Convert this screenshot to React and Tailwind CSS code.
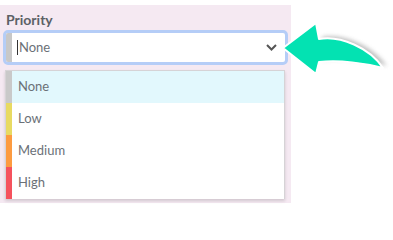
import React from "react";

const options = [
  { label: "None", bar: "bg-[#c9c9c9]", row: "bg-[#e2f8fd]" },
  { label: "Low", bar: "bg-[#e8da62]", row: "bg-white" },
  { label: "Medium", bar: "bg-[#fd9b40]", row: "bg-white" },
  { label: "High", bar: "bg-[#f5525d]", row: "bg-white" },
];

export default function App() {
  return (
    <div className="relative w-[393px] h-[208px] bg-white pt-[5px] font-['Lato',sans-serif] overflow-hidden">
      <div className="w-[291px] h-[198px] bg-[#f5e9f2] pt-[5px] pl-[3px]">
        <div className="h-[20px] leading-[20px] text-[14px] font-bold text-[#5c6166] pl-[3px]">
          Priority
        </div>
        <div className="flex items-stretch w-[285px] h-[35px] border-[3px] border-[#b5cdf7] rounded-[5px] bg-white overflow-hidden">
          <div className="w-[6px] bg-[#c8c8c8]" />
          <div className="flex flex-1 items-center pl-[5px] pr-[8px]">
            <span className="w-px h-[15px] bg-[#333]" />
            <span className="ml-[1px] text-[13px] text-[#6b7177]">None</span>
            <span className="flex-1" />
            <svg width="11" height="7" viewBox="0 0 11 7">
              <polyline points="1,1 5.5,5.5 10,1" fill="none" stroke="#555" strokeWidth="2" />
            </svg>
          </div>
        </div>
        <div className="mt-[5px] ml-[2px] w-[280px] border-x border-t border-[#d6d3d6] shadow-[0_2px_3px_rgba(0,0,0,0.15)]">
          {options.map((o) => (
            <div key={o.label} className={`flex h-[32px] ${o.row}`}>
              <div className={`w-[6px] ${o.bar}`} />
              <div className="flex items-center pl-[6px] text-[13px] text-[#6b7177]">{o.label}</div>
            </div>
          ))}
        </div>
      </div>
      <svg className="absolute left-0 top-0 pointer-events-none" width="393" height="208" viewBox="0 0 393 208">
        <defs>
          <filter id="blur" x="-20%" y="-20%" width="140%" height="140%">
            <feGaussianBlur stdDeviation="2" />
          </filter>
        </defs>
        <path
          d="M 319 39 C 340 35, 370 48, 384 68 C 366 63, 342 60, 319 62 Z"
          fill="#8a8a8a"
          opacity="0.55"
          filter="url(#blur)"
          transform="translate(3,-2)"
        />
        <path
          d="M 283 48 L 316 23 L 319 39 C 340 35, 370 48, 383 68 C 365 63, 340 60, 319 62 L 316 74 Z"
          fill="#03e2b2"
          stroke="white"
          strokeWidth="2"
          strokeLinejoin="round"
        />
      </svg>
    </div>
  );
}
